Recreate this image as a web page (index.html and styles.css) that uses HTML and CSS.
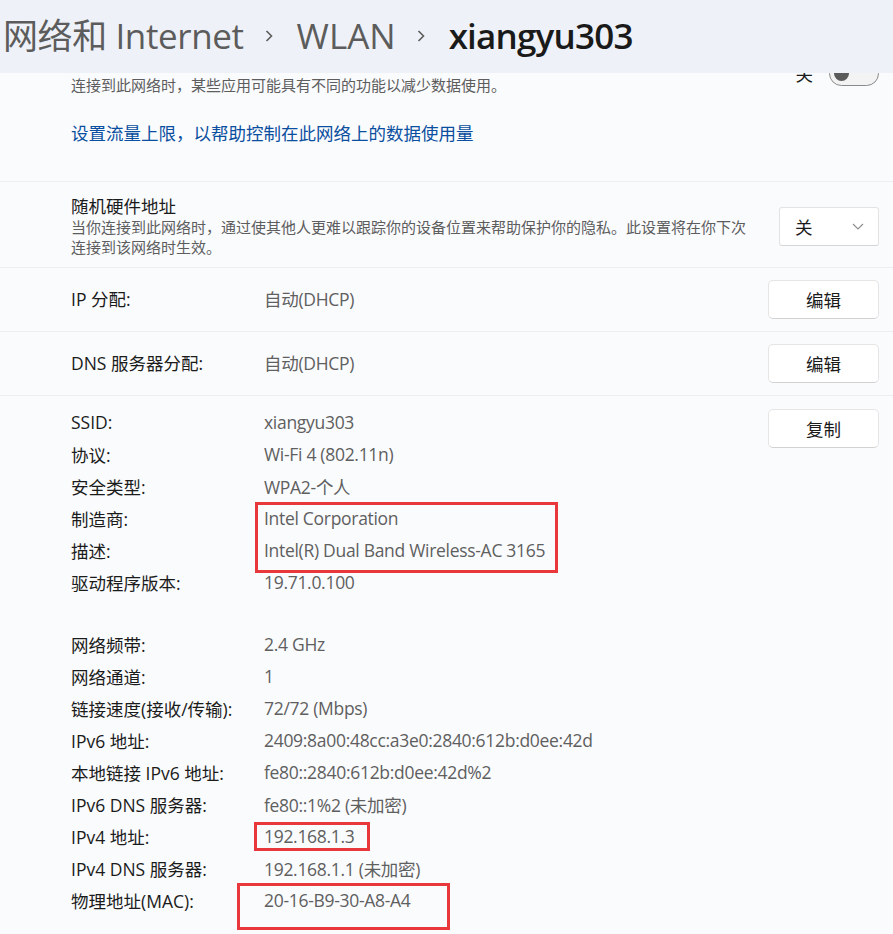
FILE: index.html
```html
<!DOCTYPE html>
<html lang="zh-CN">
<head>
  <meta charset="UTF-8">
  <meta name="viewport" content="width=device-width, initial-scale=1.0">
  <title>xiangyu303</title>
  <link rel="stylesheet" href="styles.css">
</head>
<body>
  <!-- Breadcrumb title bar, stays over the scrolled content -->
  <header class="titlebar">
    <span class="crumb first">网络和 Internet</span>
    <svg class="sep" viewBox="0 0 8 12" width="8" height="12"><polyline points="1.5,1 6.5,6 1.5,11" /></svg>
    <span class="crumb">WLAN</span>
    <svg class="sep" viewBox="0 0 8 12" width="8" height="12"><polyline points="1.5,1 6.5,6 1.5,11" /></svg>
    <span class="crumb current">xiangyu303</span>
  </header>

  <main class="content">
    <!-- Metered connection (its title is scrolled under the title bar) -->
    <section class="group metered">
      <div class="setting">
        <div class="setting-text">
          <div class="setting-title"></div>
          <div class="setting-desc">连接到此网络时，某些应用可能具有不同的功能以减少数据使用。</div>
        </div>
        <div class="toggle-wrap">
          <span>关</span>
          <span class="toggle"><span class="knob"></span></span>
        </div>
      </div>
      <a class="link" href="#">设置流量上限，以帮助控制在此网络上的数据使用量</a>
    </section>

    <!-- Random hardware address -->
    <section class="group random-mac">
      <div class="setting">
        <div class="setting-text">
          <div class="setting-title">随机硬件地址</div>
          <div class="setting-desc wrap">当你连接到此网络时，通过使其他人更难以跟踪你的设备位置来帮助保护你的隐私。此设置将在你下次连接到该网络时生效。</div>
        </div>
        <div class="dropdown">
          <span>关</span>
          <svg viewBox="0 0 12 7" width="12" height="7"><polyline points="1,1 6,6 11,1" /></svg>
        </div>
      </div>
    </section>

    <!-- IP / DNS assignment -->
    <section class="group line-row">
      <span class="label">IP 分配:</span>
      <span class="value">自动(DHCP)</span>
      <button class="btn">编辑</button>
    </section>

    <section class="group line-row">
      <span class="label">DNS 服务器分配:</span>
      <span class="value">自动(DHCP)</span>
      <button class="btn">编辑</button>
    </section>

    <!-- Properties -->
    <section class="group props">
      <dl class="prop-list">
        <div class="prop"><dt>SSID:</dt><dd>xiangyu303</dd></div>
        <div class="prop"><dt>协议:</dt><dd>Wi-Fi 4 (802.11n)</dd></div>
        <div class="prop"><dt>安全类型:</dt><dd>WPA2-个人</dd></div>
        <div class="prop"><dt>制造商:</dt><dd>Intel Corporation</dd></div>
        <div class="prop"><dt>描述:</dt><dd>Intel(R) Dual Band Wireless-AC 3165</dd></div>
        <div class="prop"><dt>驱动程序版本:</dt><dd>19.71.0.100</dd></div>
        <div class="prop-gap"></div>
        <div class="prop"><dt>网络频带:</dt><dd>2.4 GHz</dd></div>
        <div class="prop"><dt>网络通道:</dt><dd>1</dd></div>
        <div class="prop"><dt>链接速度(接收/传输):</dt><dd>72/72 (Mbps)</dd></div>
        <div class="prop"><dt>IPv6 地址:</dt><dd>2409:8a00:48cc:a3e0:2840:612b:d0ee:42d</dd></div>
        <div class="prop"><dt>本地链接 IPv6 地址:</dt><dd>fe80::2840:612b:d0ee:42d%2</dd></div>
        <div class="prop"><dt>IPv6 DNS 服务器:</dt><dd>fe80::1%2 (未加密)</dd></div>
        <div class="prop"><dt>IPv4 地址:</dt><dd>192.168.1.3</dd></div>
        <div class="prop"><dt>IPv4 DNS 服务器:</dt><dd>192.168.1.1 (未加密)</dd></div>
        <div class="prop"><dt>物理地址(MAC):</dt><dd>20-16-B9-30-A8-A4</dd></div>
      </dl>
      <button class="btn copy">复制</button>

      <!-- red highlight boxes drawn over the list -->
      <span class="mark mark-adapter"></span>
      <span class="mark mark-ipv4"></span>
      <span class="mark mark-mac"></span>
    </section>
  </main>
</body>
</html>
```

FILE: styles.css
```css
body {
  margin: 0;
  background-color: #fafbfd;
  font-family: "Open Sans", "Noto Sans CJK SC", sans-serif;
  color: #1b1b1b;
  font-size: 17.5px;
}

.titlebar {
  position: fixed;
  top: 0;
  left: 0;
  right: 0;
  height: 73px;
  z-index: 10;
  background-color: #eef2f8;
  display: flex;
  align-items: center;
  padding-left: 3px;
  padding-bottom: 2px;
  box-sizing: border-box;
}

.crumb {
  font-size: 35px;
  color: #5c5c5c;
  line-height: 44px;
}

.crumb.first {
  letter-spacing: -0.4px;
}

.crumb.current {
  color: #1a1a1a;
  font-weight: 600;
  letter-spacing: -0.8px;
}

.sep {
  margin: 0 24px 0 21px;
  fill: none;
  stroke: #5c5c5c;
  stroke-width: 1.6;
}

.content {
  display: flex;
  flex-direction: column;
}

.group {
  border-bottom: 1px solid #eceef2;
  padding: 0 14px 0 71px;
}

.setting {
  display: flex;
  align-items: center;
  justify-content: space-between;
}

.setting-title {
  font-size: 17.5px;
  line-height: 22px;
}

.setting-desc {
  font-size: 15px;
  line-height: 20px;
  color: #5d5d5d;
}

.setting-desc.wrap {
  width: 680px;
}

.metered {
  padding-top: 51px;
  padding-bottom: 36px;
}

.metered .setting-title {
  height: 24px;
}

.link {
  display: block;
  margin-top: 26px;
  line-height: 24px;
  color: #0a4f9f;
  text-decoration: none;
}

.toggle-wrap {
  display: flex;
  align-items: center;
  gap: 16px;
  font-size: 17.5px;
}

.toggle {
  width: 50px;
  height: 25px;
  box-sizing: border-box;
  border: 1.5px solid #8a8a8a;
  border-radius: 13px;
  background-color: #f3f3f3;
  display: flex;
  align-items: center;
  padding-left: 4px;
}

.knob {
  width: 15px;
  height: 15px;
  border-radius: 50%;
  background-color: #5a5a5a;
}

.random-mac {
  padding-top: 13px;
  padding-bottom: 10px;
}

.dropdown {
  width: 100px;
  height: 39px;
  box-sizing: border-box;
  background-color: #fff;
  border: 1px solid #e3e3e3;
  border-bottom-color: #d6d6d6;
  border-radius: 3px;
  display: flex;
  align-items: center;
  justify-content: space-between;
  padding: 0 14px 0 15px;
}

.dropdown svg {
  fill: none;
  stroke: #8c8c8c;
  stroke-width: 1.1;
}

.line-row {
  height: 63px;
  display: flex;
  align-items: center;
}

.label {
  width: 193px;
  flex-shrink: 0;
  margin-top: -2px;
}

.value {
  flex: 1;
  color: #5f5f5f;
  margin-top: -2px;
  letter-spacing: -0.3px;
}

.btn {
  width: 111px;
  height: 39px;
  background-color: #fff;
  border: 1px solid #e5e5e5;
  border-bottom-color: #d2d2d2;
  border-radius: 5px;
  font-family: inherit;
  font-size: 17.5px;
  color: #1b1b1b;
  padding: 0;
}

.props {
  position: relative;
  display: flex;
  align-items: flex-start;
  padding-top: 10px;
  padding-bottom: 20px;
  border-bottom: none;
}

.prop-list {
  flex: 1;
  margin: 0;
}

.prop {
  display: flex;
  height: 32px;
  align-items: center;
}

.prop dt {
  width: 193px;
  flex-shrink: 0;
}

.prop dd {
  margin: 0;
  color: #5f5f5f;
  letter-spacing: -0.3px;
}

.prop-gap {
  height: 30px;
}

.copy {
  margin-top: 3px;
}

.mark {
  position: absolute;
  border: 3px solid #e8383c;
  box-sizing: border-box;
}

.mark-adapter {
  top: 106px;
  left: 255px;
  width: 303px;
  height: 71px;
}

.mark-ipv4 {
  top: 426px;
  left: 254px;
  width: 116px;
  height: 29px;
}

.mark-mac {
  top: 487px;
  left: 237px;
  width: 213px;
  height: 47px;
}
```
